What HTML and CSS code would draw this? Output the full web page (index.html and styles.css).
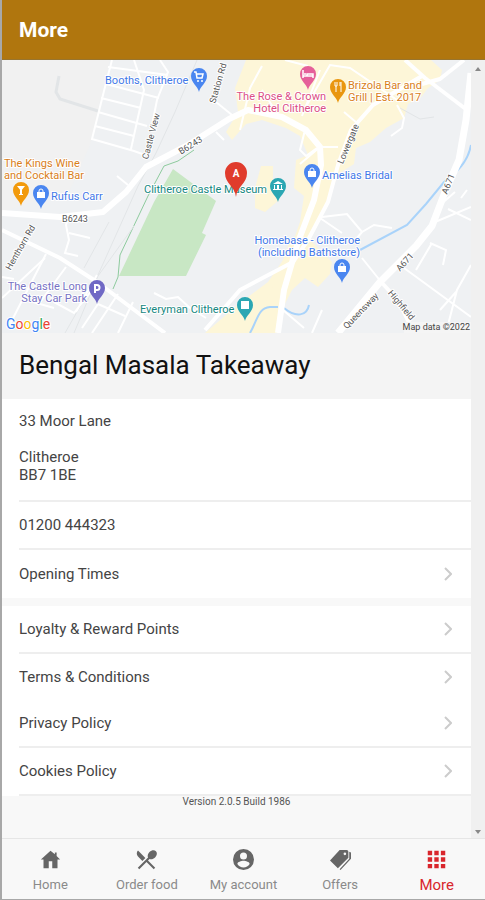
FILE: index.html
```
<!DOCTYPE html>
<html lang="en">
<head>
  <meta charset="UTF-8" />
  <meta name="viewport" content="width=device-width, initial-scale=1.0" />
  <title>More - Bengal Masala Takeaway</title>
  <link rel="stylesheet" href="styles.css">
</head>
<body>
  <header class="topbar">
    <h1>More</h1>
  </header>

  <div class="view">
    <main class="content">
      <svg class="map" viewBox="2 60 469 273" role="img" aria-label="Map of Clitheroe">
        <defs>
          <path id="pin" d="M0 12C-1 6-8 3-8-4a8 8 0 0 1 16 0C8 3 1 6 0 12z" />
          <g id="bag"><path d="M-4-5h8v6h-8z" fill="#fff" /><path d="M-2-5v-1a2 2 0 0 1 4 0v1" fill="none" stroke="#fff" /></g>
        </defs>
        <rect x="2" y="60" width="469" height="273" fill="#eff1f3" />
        <path d="M2 60h108L98 110 90 145 70 190 2 212z" fill="#f1f1f1" />

        <!-- town centre and parks -->
        <g fill="#fdf6d8">
          <path d="M246 60H431L442 70 440 80 428 88 422 96 408 104 404 118 386 128 370 142 356 148 354 164 338 174 326 208 308 238 292 262 283 300 278 333H205L240 303 268 282 290 250 300 222 304 196 294 188 296 160 308 155 300 136 286 128 262 120 246 124 232 140 226 132 238 112 235 88z" />
          <path d="M290 240 310 240 332 262 330 274 318 287 305 278 292 290 270 333H252L276 280z" />
          <path d="M261 166h12v14h8l-2 20-14 12-10-4v-20z" />
        </g>
        <path d="M173 169 216 201 202 233 206 235 186 276H119L154 202z" fill="#c8e7c4" />
        <path d="M194 150 178 161 164 166 148 196 120 255 118 277 113 289" fill="none" stroke="#8ecb9e" />

        <!-- railway -->
        <g fill="none" stroke="#e2e5e7">
          <path d="M197 60 175 112 156 153 138 186 98 275 65 333M109 222 84 268M134 226 98 276 74 333" />
          <path d="M59 76 56 92 60 99 98 111" stroke-width="3" />
          <path d="M400 108 420 119 434 117" />
        </g>

        <!-- water -->
        <g fill="none" stroke="#a9d3fa" stroke-width="2">
          <path d="M471 145C468 162 457 172 444 182L426 204 407 225 360 250" />
          <path d="M250 333C258 319 258 308 270 307H278M284 308C296 318 307 316 309 305" />
        </g>

        <!-- side streets -->
        <g fill="none" stroke="#fff" stroke-width="2">
          <path d="M112 60 105 87 92 139 134 151 145 155M134 60 144 90 131 149M160 60 168 72 157 100 151 130M108 67 168 75M106 84 159 98M101 98 141 108M98 112 147 126M95 126 134 136M117 176 128 185M216 102 232 115M216 132 224 140" />
          <path d="M69 214 66 225 69 240 65 253 78 256M69 233 90 238M46 254 10 324M66 267 38 305M97 275 76 312M33 302 54 308M54 302 74 313 92 290M2 277 14 279M98 304 82 328M118 294 92 333M133 302 118 333M98 304 125 316M154 293 166 299 178 297 190 308M190 308 206 318" />
          <path d="M240 130 250 88 262 66M262 90 275 110M300 164 320 147M305 130 300 150 306 156 317 148M320 147H338M344 112 357 123M397 105 404 118 402 128 391 136M304 110 330 65 350 68 397 100M285 60 308 66M302 116 320 70" />
          <path d="M322 217 347 214 362 232 374 225 392 228M362 232 352 244M362 258 382 283M404 268 471 317M430 243 446 250 443 265M448 209 471 220M435 222 471 207M455 192 440 205M432 243 416 270M471 265 457 290 448 325M456 292 440 310M461 198 467 190" />
          <path d="M2 298 45 258M320 218 342 233M312 333 322 310M283 310 304 328" />
        </g>

        <!-- main roads -->
        <g fill="none" stroke="#fff" stroke-linejoin="round">
          <path d="M2 230 60 258 97 282 165 333" stroke-width="4" />
          <path d="M2 213 60 217 103 212 126 192 146 167 188 145 229 119 248 110 282 117 306 130 320 147 321 165 314 200 298 242 284 290 278 333" stroke-width="6" />
          <path d="M422 76 373 105 351 130 338 165 328 202 308 240 293 262 240 290 205 330" stroke-width="4" />
          <path d="M405 60 425 78 467 110M464 60 440 79 422 84" stroke-width="4" />
          <path d="M471 73 466 120 459 160 445 192 432 226 416 246 380 282 338 333" stroke-width="7" />
          <path d="M382 283 398 300 414 333" stroke-width="4" />
        </g>

        <!-- street names -->
        <g class="street" text-anchor="middle">
          <text transform="translate(221 84) rotate(-74)">Station Rd</text>
          <text transform="translate(154 137) rotate(-75)">Castle View</text>
          <text transform="translate(192 148) rotate(-32)">B6243</text>
          <text x="75" y="222">B6243</text>
          <text transform="translate(23 249) rotate(-60)">Henthorn Rd</text>
          <text transform="translate(351 145) rotate(-67)">Lowergate</text>
          <text transform="translate(451 185) rotate(-68)">A671</text>
          <text transform="translate(407 264) rotate(-48)">A671</text>
          <text transform="translate(363 313) rotate(-46)">Queensway</text>
          <text transform="translate(399 307) rotate(50)">Highfield</text>
        </g>

        <!-- places -->
        <g class="place blue">
          <text x="105" y="84">Booths, Clitheroe</text>
          <text x="51" y="200">Rufus Carr</text>
          <text x="322" y="179">Amelias Bridal</text>
          <text x="360" y="244" text-anchor="end">Homebase - Clitheroe</text>
          <text x="360" y="256" text-anchor="end">(including Bathstore)</text>
        </g>
        <g class="place orange">
          <text x="4" y="167">The Kings Wine</text>
          <text x="4" y="179">and Cocktail Bar</text>
          <text x="348" y="89">Brizola Bar and</text>
          <text x="348" y="101">Grill | Est. 2017</text>
        </g>
        <g class="place pink" text-anchor="end">
          <text x="326" y="100">The Rose &amp; Crown</text>
          <text x="326" y="112">Hotel Clitheroe</text>
        </g>
        <g class="place teal">
          <text x="144" y="193">Clitheroe Castle Museum</text>
          <text x="140" y="313">Everyman Clitheroe</text>
        </g>
        <g class="place violet" text-anchor="end">
          <text x="87" y="290">The Castle Long</text>
          <text x="87" y="302">Stay Car Park</text>
        </g>

        <g transform="translate(199 80)">
          <use href="#pin" fill="#4a86f0" />
          <path d="M-5-8h2l1 6h5l1-4h-6" fill="none" stroke="#fff" stroke-width="1.5" /><circle cx="-1" cy="1" r="1" fill="#fff" /><circle cx="3" cy="1" r="1" fill="#fff" />
        </g>
        <g transform="translate(41 197)"><use href="#pin" fill="#4a86f0" /><use href="#bag" /></g>
        <g transform="translate(312 176)"><use href="#pin" fill="#4a86f0" /><use href="#bag" /></g>
        <g transform="translate(342 271)"><use href="#pin" fill="#4a86f0" /><use href="#bag" /></g>
        <g transform="translate(21 194)"><use href="#pin" fill="#f29a0c" /><path d="M-4-8h8L0-3zM-1-4h2v4h-2zM-2 0h4v1h-4z" fill="#fff" /></g>
        <g transform="translate(338 91)"><use href="#pin" fill="#e9960f" /><path d="M-3-9v4M-1-9v4M-3-5h2M-2-5v6M3-9v10M2-9v4" fill="none" stroke="#fff" /></g>
        <g transform="translate(308 78)"><use href="#pin" fill="#e5609a" /><path d="M-5-8v8M-5-2H5M5 0v-4h-6v2" fill="none" stroke="#fff" stroke-width="1.5" /><circle cx="-3" cy="-4" r="1" fill="#fff" /></g>
        <g transform="translate(278 190)"><use href="#pin" fill="#2ba7b3" /><path d="M0-9 5-6H-5zM-4-5h1v4h-1zM-1-5h2v4h-2zM3-5h1v4h-1zM-5-1H5v1H-5z" fill="#fff" /></g>
        <g transform="translate(245 309)"><use href="#pin" fill="#2ba7b3" /><path d="M-4-8h8v8h-8z" fill="#fff" /></g>
        <g transform="translate(97 292)"><use href="#pin" fill="#7069c5" /><path d="M-2 1v-8h2a2 2 0 0 1 0 5h-2" fill="none" stroke="#fff" stroke-width="2" /></g>

        <path d="M236 197C235 186 225 184 225 173a11 11 0 0 1 22 0C247 184 237 186 236 197z" fill="#e03b2c" />
        <text class="marker" x="236" y="177" text-anchor="middle">A</text>

        <text class="google" x="6" y="329"><tspan fill="#4285f4">G</tspan><tspan fill="#ea4335">o</tspan><tspan fill="#fbbc05">o</tspan><tspan fill="#4285f4">g</tspan><tspan fill="#34a853">l</tspan><tspan fill="#ea4335">e</tspan></text>
        <rect x="404" y="322" width="67" height="11" fill="#f5f5f5" />
        <text class="credit" x="470" y="330" text-anchor="end">Map data ©2022</text>
      </svg>

      <h2 class="name">Bengal Masala Takeaway</h2>

      <ul class="list">
        <li><address class="row address">33 Moor Lane<br><br>Clitheroe<br>BB7 1BE</address></li>
        <li><a class="row" href="tel:01200444323">01200 444323</a></li>
        <li><a class="row" href="#opening">Opening Times<svg class="chevron" viewBox="0 0 8 14"><path d="M1 1l6 6-6 6" /></svg></a></li>
      </ul>

      <ul class="list links">
        <li><a class="row" href="#loyalty">Loyalty &amp; Reward Points<svg class="chevron" viewBox="0 0 8 14"><path d="M1 1l6 6-6 6" /></svg></a></li>
        <li class="plain"><a class="row" href="#terms">Terms &amp; Conditions<svg class="chevron" viewBox="0 0 8 14"><path d="M1 1l6 6-6 6" /></svg></a></li>
        <li><a class="row" href="#privacy">Privacy Policy<svg class="chevron" viewBox="0 0 8 14"><path d="M1 1l6 6-6 6" /></svg></a></li>
        <li><a class="row" href="#cookies">Cookies Policy<svg class="chevron" viewBox="0 0 8 14"><path d="M1 1l6 6-6 6" /></svg></a></li>
      </ul>

      <p class="version">Version 2.0.5 Build 1986</p>
    </main>

    <div class="scrollbar" aria-hidden="true">
      <svg viewBox="0 0 6 4"><path d="M0 4l3-4 3 4z" /></svg>
      <svg viewBox="0 0 6 4"><path d="M0 0l3 4 3-4z" /></svg>
    </div>
  </div>

  <nav class="tabs">
    <a href="#home">
      <svg viewBox="0 0 24 24"><path d="M12 2 1 12h3v10h6v-8h4v8h6V12h3l-4-4V4h-2v2z" /></svg>
      Home
    </a>
    <a href="#order">
      <svg viewBox="2 2 20 20"><path d="M8.100 13.340l2.830-2.830L3.910 3.500a4 4 0 0 0 0 5.660zM14.880 11.530c1.530.71 3.680.21 5.270-1.380 1.910-1.910 2.280-4.650.81-6.120-1.460-1.460-4.200-1.100-6.120.81-1.590 1.590-2.090 3.740-1.380 5.270L3.700 19.870l1.410 1.410L12 14.410l6.880 6.880 1.410-1.410L13.410 13z" /></svg>
      Order food
    </a>
    <a href="#account">
      <svg viewBox="0 0 24 24"><path fill-rule="evenodd" d="M12 0a12 12 0 1 0 0 24 12 12 0 0 0 0-24zM12 4a4 4 0 1 1 0 8 4 4 0 0 1 0-8zM12 21c-3 0-5.500-1.500-7-4 0-2 4.500-3.500 7-3.500s7 1.500 7 3.500c-1.500 2.500-4 4-7 4z" /></svg>
      My account
    </a>
    <a href="#offers">
      <svg viewBox="0 0 24 24"><path fill-rule="evenodd" d="M11 1 19 1a2 2 0 0 1 2 2v7L9 22 0 13zM17 4a1.500 1.500 0 1 0 0 3 1.500 1.500 0 0 0 0-3z" /><path d="M22 3l2 1v7L12 24l-1-1 11-12z" /></svg>
      Offers
    </a>
    <a class="active" href="#more" aria-current="page">
      <svg viewBox="0 0 24 24"><path d="M2 2h5v5H2zM9.500 2h5v5h-5zM17 2h5v5h-5zM2 9.500h5v5H2zM9.500 9.500h5v5h-5zM17 9.500h5v5h-5zM2 17h5v5H2zM9.500 17h5v5h-5zM17 17h5v5h-5z" /></svg>
      More
    </a>
  </nav>
</body>
</html>
```
FILE: styles.css
```
*,*::before,*::after{box-sizing:border-box;margin:0;padding:0}
body{font-family:Roboto,sans-serif;font-size:15px;line-height:18px;color:#444;background:#f8f8f8;min-height:100vh;display:flex;flex-direction:column;border-left:2px solid #a8a8a8;border-bottom:1px solid #a8a8a8}
a{color:inherit;text-decoration:none}
ul{list-style:none}

.topbar{height:60px;padding:0 17px;display:flex;align-items:center;background:#b0760e;border-bottom:1px solid #98752f;color:#fff}
.topbar h1{font-size:21px;font-weight:700;line-height:28px}

.view{flex:1;display:flex}
.content{flex:1;min-width:0}
.scrollbar{width:14px;padding:7px 4px 4px;display:flex;flex-direction:column;justify-content:space-between;background:#f0f0f0}
.scrollbar svg{width:6px;height:4px;fill:#888}

.map{display:block;width:100%;height:auto}
.map text{font-size:10px}
.map .street text{font-size:9px}
.map .place text{font-size:11px}
.place,.street{paint-order:stroke;stroke:#fff;stroke-width:2px;stroke-linejoin:round}
.street{fill:#555}
.blue{fill:#3f78e8}
.orange{fill:#d9801a}
.pink{fill:#dc4f85}
.teal{fill:#15877f}
.violet{fill:#7672c4}
.map .marker{font-weight:700;fill:#fff}
.map .google{font-size:14px;paint-order:stroke;stroke:#fff;stroke-width:2px}
.map .credit{font-size:9px;fill:#444}

.name{padding:16px 17px 18px;font-size:26px;font-weight:400;line-height:32px;color:#111;background:#f4f4f4}

.list{background:#fff}
.list li{padding-left:17px}
.row{display:flex;align-items:center;justify-content:space-between;min-height:48px;padding-right:19px;border-bottom:2px solid #eee}
.address{display:block;padding:13px 0 16px;font-style:normal}
.list:not(.links) li:last-child .row{border-bottom:0}
.links{margin-top:8px}
.plain .row{min-height:46px;border-bottom:0}
.chevron{width:8px;height:14px;fill:none;stroke:#ccc;stroke-width:2}

.version{font-size:10px;line-height:12px;text-align:center;color:#555}

.tabs{display:flex;height:61px;border-top:1px solid #e6e6e6;color:#8a8a8a;font-size:13px}
.tabs a{flex:1;display:flex;flex-direction:column;align-items:center;justify-content:center;gap:6px;padding-top:4px}
.tabs svg{width:21px;height:21px;fill:#666}
.tabs .active{font-size:15px;color:#d9262c}
.tabs .active svg{fill:#d9262c}
```
